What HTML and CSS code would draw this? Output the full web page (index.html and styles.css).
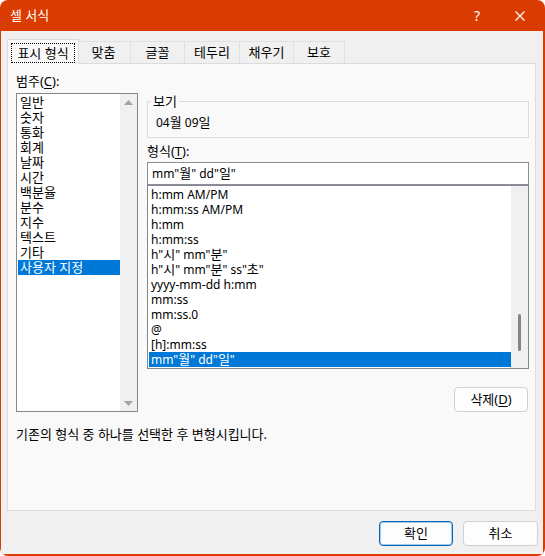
FILE: index.html
```html
<!DOCTYPE html>
<html lang="ko">
<head>
<meta charset="utf-8">
<title>셀 서식</title>
<link rel="stylesheet" href="styles.css">
</head>
<body>
<div class="window">
  <div class="titlebar">
    <span class="title">셀 서식</span>
    <span class="tb-help">?</span>
    <span class="tb-close"><svg width="10" height="10" viewBox="0 0 10 10"><path d="M0.5 0.5L9.5 9.5M9.5 0.5L0.5 9.5" stroke="#fff" stroke-width="1.1" fill="none"/></svg></span>
  </div>
  <div class="client">
    <div class="tabs">
      <div class="tab active"><span class="focus">표시 형식</span></div>
      <div class="tab w55">맞춤</div>
      <div class="tab w55">글꼴</div>
      <div class="tab w56">테두리</div>
      <div class="tab w55">채우기</div>
      <div class="tab w52">보호</div>
    </div>
    <div class="panel">
      <div class="cols">
        <div class="left">
          <div class="label">범주(<u>C</u>):</div>
          <div class="listbox cat">
            <div class="items">
              <div class="item">일반</div>
              <div class="item">숫자</div>
              <div class="item">통화</div>
              <div class="item">회계</div>
              <div class="item">날짜</div>
              <div class="item">시간</div>
              <div class="item">백분율</div>
              <div class="item">분수</div>
              <div class="item">지수</div>
              <div class="item">텍스트</div>
              <div class="item">기타</div>
              <div class="item sel">사용자 지정</div>
            </div>
            <div class="vscroll arrows">
              <svg width="9" height="5" viewBox="0 0 9 5"><path d="M4.5 0L9 5H0Z" fill="#a3a3a3"/></svg>
              <svg width="9" height="5" viewBox="0 0 9 5"><path d="M0 0H9L4.5 5Z" fill="#a3a3a3"/></svg>
            </div>
          </div>
        </div>
        <div class="right">
          <div class="group">
            <span class="legend">보기</span>
            <div class="sample">04<span class="ko">월</span> 09<span class="ko">일</span></div>
          </div>
          <div class="label fmt-label">형식(<u>T</u>):</div>
          <div class="input">mm"<span class="ko">월</span>" dd"<span class="ko">일</span>"</div>
          <div class="listbox fmt">
            <div class="items">
              <div class="item">h:mm AM/PM</div>
              <div class="item">h:mm:ss AM/PM</div>
              <div class="item">h:mm</div>
              <div class="item">h:mm:ss</div>
              <div class="item">h"<span class="ko">시</span>" mm"<span class="ko">분</span>"</div>
              <div class="item">h"<span class="ko">시</span>" mm"<span class="ko">분</span>" ss"<span class="ko">초</span>"</div>
              <div class="item">yyyy-mm-dd h:mm</div>
              <div class="item">mm:ss</div>
              <div class="item">mm:ss.0</div>
              <div class="item">@</div>
              <div class="item">[h]:mm:ss</div>
              <div class="item sel">mm"<span class="ko">월</span>" dd"<span class="ko">일</span>"</div>
            </div>
            <div class="vscroll thumbbar"><span class="thumb"></span></div>
          </div>
          <div class="btn-row"><button class="btn del">삭제(<u>D</u>)</button></div>
        </div>
      </div>
      <div class="desc">기존의 형식 중 하나를 선택한 후 변형시킵니다.</div>
    </div>
    <div class="footer">
      <button class="btn ok">확인</button>
      <button class="btn cancel">취소</button>
    </div>
  </div>
</div>
</body>
</html>
```
FILE: styles.css
```css
* { box-sizing: border-box; }
html, body { margin: 0; padding: 0; background: #ffffff; }
body {
  font-family: "Noto Sans", "Noto Sans CJK KR", sans-serif;
  font-size: 13px;
  color: #000;
}
u { text-decoration: underline; text-underline-offset: 2px; }
.ko { font-size: 13px; }

.window {
  width: 545px;
  height: 556px;
  border-radius: 8px;
  overflow: hidden;
  background: #da3b01;
  padding: 0 2px 2px 1px;
  display: flex;
  flex-direction: column;
}

.titlebar {
  height: 31px;
  flex: none;
  display: flex;
  align-items: center;
  color: #fff;
  padding-left: 9px;
}
.title { flex: 1; line-height: 15px; }
.tb-help {
  width: 40px;
  text-align: center;
  font-size: 14px;
  line-height: 16px;
}
.tb-close {
  width: 46px;
  height: 31px;
  display: flex;
  align-items: center;
  justify-content: center;
}
.tb-close svg { display: block; }

.client {
  flex: 1;
  background: #f0f0f0;
  display: flex;
  flex-direction: column;
}

.tabs {
  height: 32px;
  flex: none;
  display: flex;
  align-items: flex-end;
  padding-left: 6px;
}
.tab {
  height: 22px;
  border: 1px solid #e0e0e0;
  border-bottom: 0;
  margin-left: -1px;
  background: #f0f0f0;
  display: flex;
  align-items: center;
  justify-content: center;
  line-height: 15px;
}
.tab.w55 { width: 55px; }
.tab.w56 { width: 56px; }
.tab.w52 { width: 52px; }
.tab.active {
  width: 72px;
  height: 25px;
  margin: 0 -2px -1px 0;
  background: #f9f9f9;
  border-color: #dcdcdc;
  position: relative;
  z-index: 1;
  padding: 3px 3px 1px;
  align-items: stretch;
}
.focus {
  flex: 1;
  border: 1px dotted #000;
  display: flex;
  align-items: center;
  justify-content: center;
}

.panel {
  height: 448px;
  flex: none;
  margin: 0 7px 0 6px;
  border: 1px solid #dcdcdc;
  background: #f9f9f9;
  padding: 0 6px 0 8px;
}
.cols { display: flex; gap: 9px; }
.left { width: 122px; padding-top: 10px; }
.right { width: 382px; display: flex; flex-direction: column; }

.label { line-height: 15px; height: 15px; white-space: nowrap; }

.listbox {
  display: flex;
  border: 1px solid #828790;
  background: #fff;
}
.listbox .items { flex: 1; padding: 1px 0 1px 1px; }
.item { height: 15px; line-height: 15px; padding-left: 2px; white-space: nowrap; }
.item.sel { background: #0078d7; color: #fff; }
.vscroll { width: 17px; flex: none; background: #f0f0f0; }

.cat { margin-top: 4px; height: 319px; }
.arrows {
  display: flex;
  flex-direction: column;
  justify-content: space-between;
  align-items: center;
  padding: 6px 0 5px;
}
.arrows svg { display: block; }

.group {
  margin-top: 37px;
  height: 37px;
  border: 1px solid #dcdcdc;
}
.legend {
  display: block;
  width: fit-content;
  margin: -9px 0 0 3px;
  padding: 0 2px;
  line-height: 16px;
  background: #f9f9f9;
}
.sample { margin-top: 6px; line-height: 15px; padding-left: 8px; font-size: 12px; }

.fmt-label { margin-top: 6px; }
.input {
  margin-top: 3px;
  height: 23px;
  border: 1px solid #8e8e98;
  background: #fff;
  padding-left: 4px;
  line-height: 21px;
  font-size: 12px;
}
.fmt { height: 184px; }
.fmt .item { font-size: 12px; }
.thumbbar {
  display: flex;
  flex-direction: column;
  justify-content: flex-end;
  align-items: center;
}
.thumb {
  width: 3px;
  height: 37px;
  margin-bottom: 17px;
  border-radius: 2px;
  background: #858585;
}

.btn-row { margin-top: 18px; display: flex; justify-content: flex-end; padding-right: 1px; }
.btn {
  font: inherit;
  color: #000;
  height: 25px;
  border: 1px solid #d0d0d0;
  border-radius: 4px;
  background: #fdfdfd;
  padding: 0;
  line-height: 15px;
}
.del { width: 74px; }

.desc { margin-top: 15px; line-height: 15px; }

.footer {
  display: flex;
  justify-content: flex-end;
  gap: 10px;
  padding: 10px 5px 0 0;
}
.ok { width: 74px; border-color: #0067c0; box-shadow: inset 0 0 0 1px rgba(0, 103, 192, 0.35); }
.cancel { width: 75px; }
```
